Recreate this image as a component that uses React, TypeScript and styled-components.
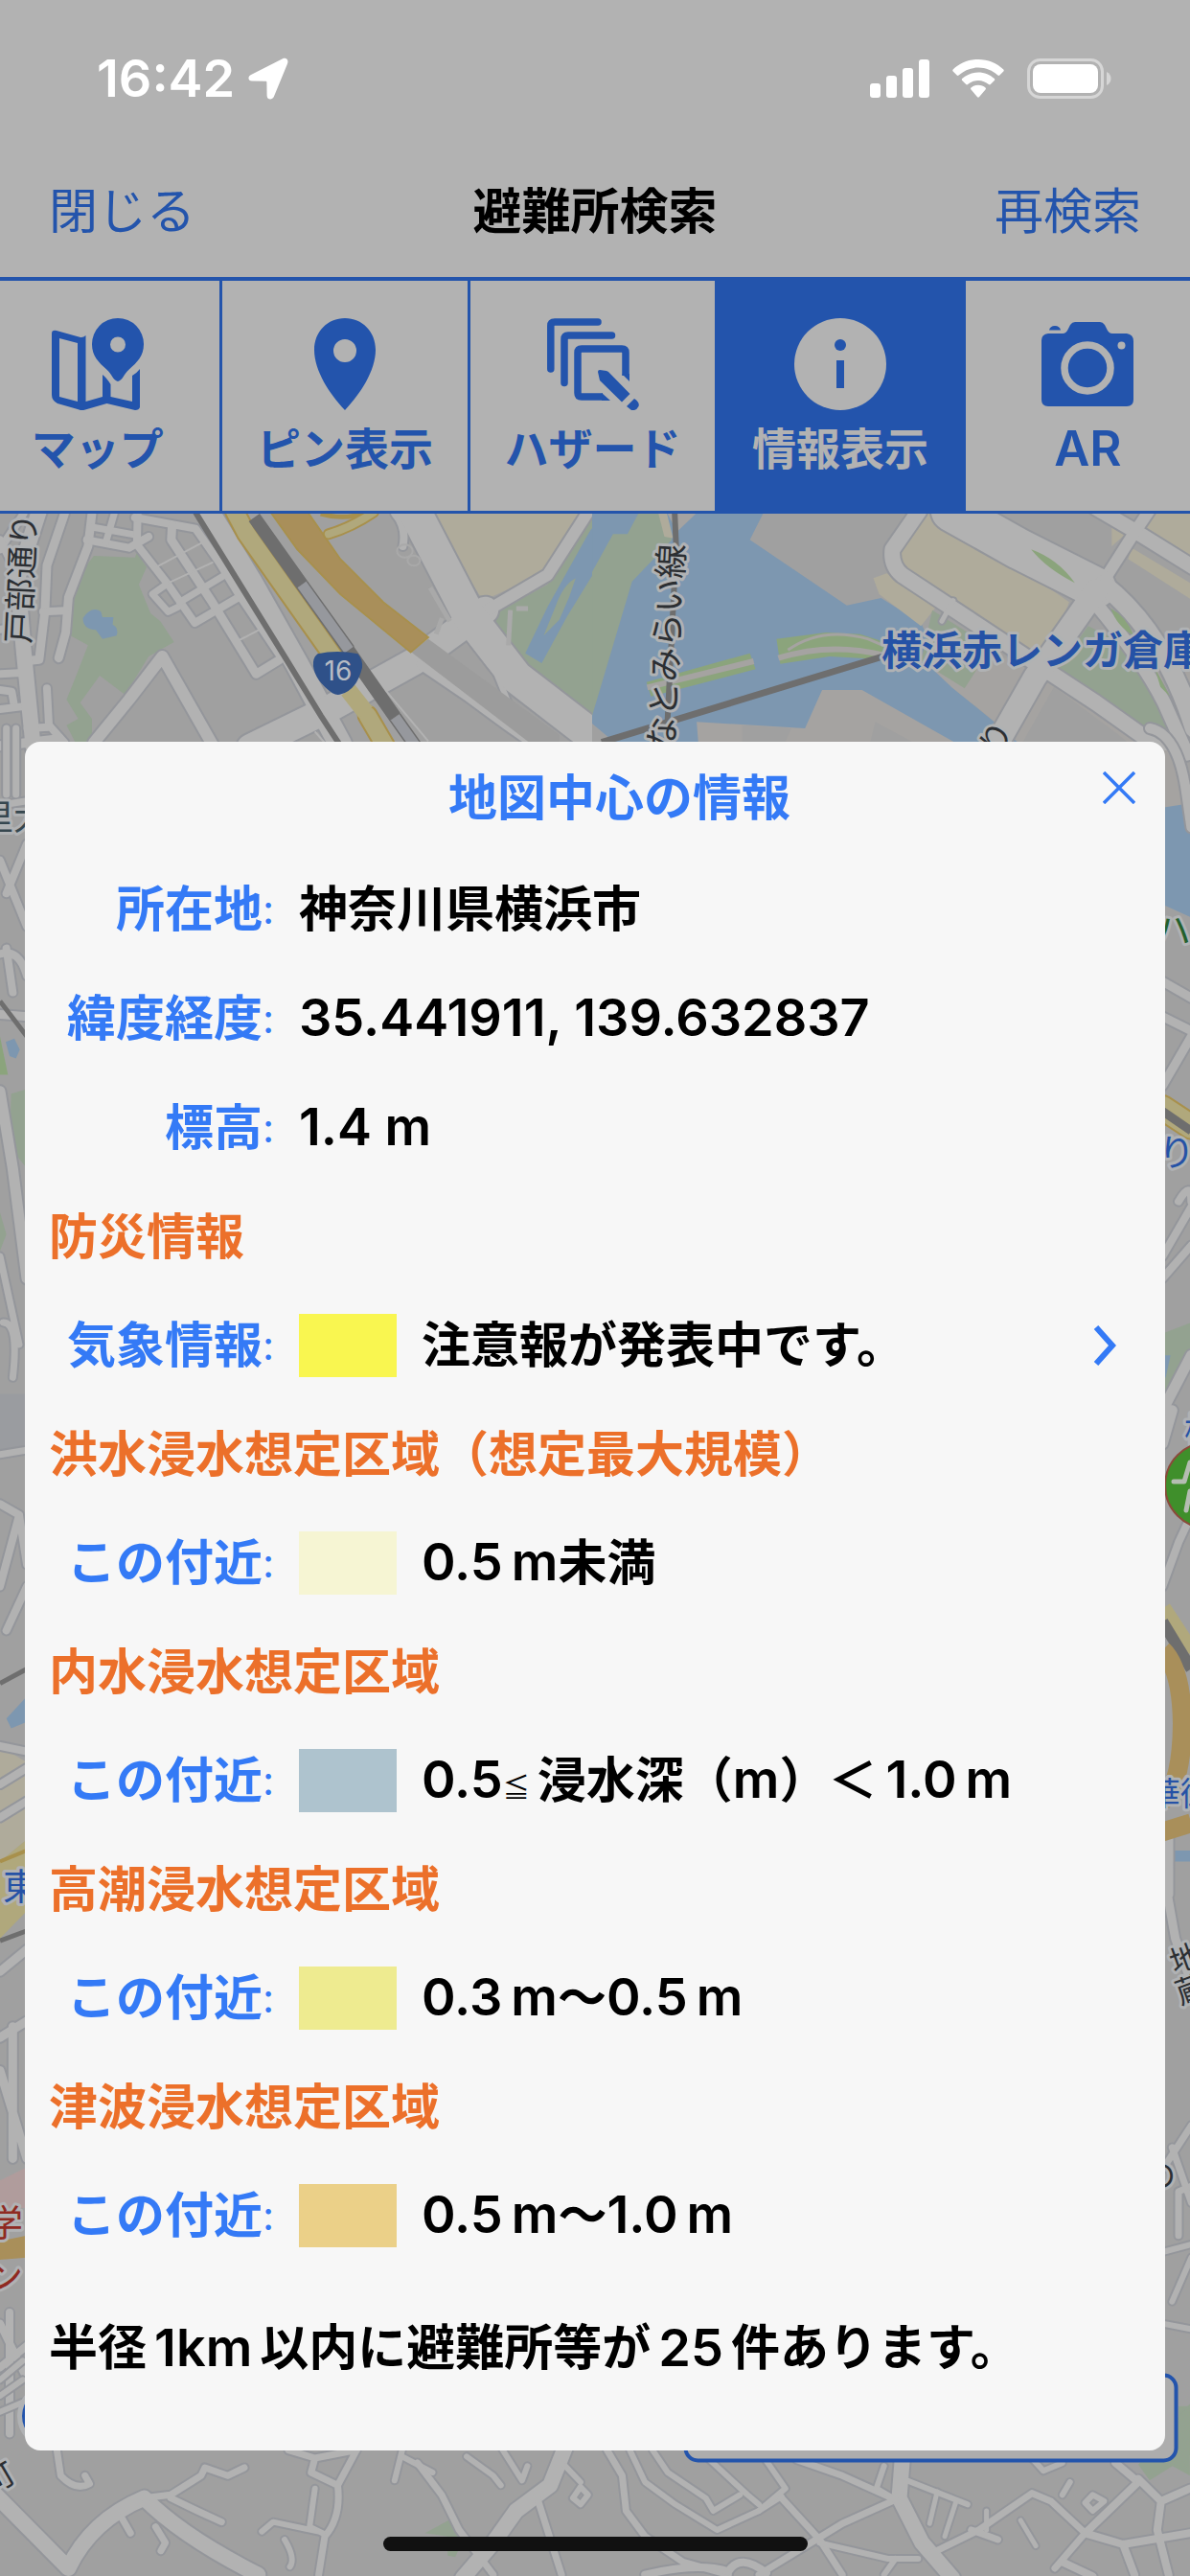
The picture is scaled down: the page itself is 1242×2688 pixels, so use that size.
import React from "react";
import styled, { createGlobalStyle } from "styled-components";

const blueDim = "#2354ac";
const blue = "#347af6";
const orange = "#ec702a";

const GlobalStyle = createGlobalStyle`
  *, *::before, *::after { box-sizing: border-box; }
  body {
    margin: 0;
    background: #b2b2b2;
    color: #000;
    font-family: Inter, "Noto Sans CJK JP", sans-serif;
  }
  button { font: inherit; color: inherit; background: none; border: 0; padding: 0; cursor: pointer; }
  h1, h2, h3, p, dl, dd, dt { margin: 0; font: inherit; }
`;

const Page = styled.div`
  min-height: 100vh;
  display: flex;
  flex-direction: column;
  overflow: hidden;
`;

const StatusBar = styled.header`
  height: 152px;
  padding: 12px 82px 0 101px;
  display: flex;
  align-items: center;
  justify-content: space-between;
  color: #fff;
`;

const StatusGroup = styled.div<{ $gap: number }>`
  display: flex;
  align-items: center;
  gap: ${(p) => p.$gap}px;
`;

const Clock = styled.time`
  font-size: 54px;
  line-height: 64px;
  font-weight: 600;
`;

const NavBar = styled.nav`
  height: 137px;
  padding: 0 51px;
  display: grid;
  grid-template-columns: 1fr auto 1fr;
  align-items: center;
  font-size: 51px;
  line-height: 72px;
`;

const NavButton = styled.button<{ $end?: boolean }>`
  justify-self: ${(p) => (p.$end ? "end" : "start")};
  color: ${blueDim};
  font-weight: 400;
`;

const NavTitle = styled.h1`
  font-weight: 700;
`;

const Tabs = styled.div`
  border-top: 4px solid ${blueDim};
  border-bottom: 3px solid ${blueDim};
`;

const TabStrip = styled.div`
  display: flex;
  margin: 0 -21px 0 -29px;
`;

const Tab = styled.button<{ $active?: boolean }>`
  flex: 1 1 0;
  min-width: 0;
  height: 240px;
  padding-top: 39px;
  display: flex;
  flex-direction: column;
  align-items: center;
  gap: 8px;
  border-left: 3px solid ${blueDim};
  background: ${(p) => (p.$active ? blueDim : "#b2b2b2")};
  color: ${(p) => (p.$active ? "#b2b2b2" : blueDim)};
  white-space: nowrap;
`;

const TabLabel = styled.span<{ $latin?: boolean }>`
  font-size: ${(p) => (p.$latin ? 51 : 46)}px;
  line-height: 64px;
  font-weight: ${(p) => (p.$latin ? 600 : 700)};
`;

const MapArea = styled.main`
  position: relative;
  flex: 1;
  padding: 238px 26px 86px;
  background: #a0a0a0;
`;

const MapCanvas = styled.svg`
  position: absolute;
  inset: 0;
  width: 100%;
  height: 100%;
`;

const Dialog = styled.section`
  position: relative;
  min-height: 1783px;
  padding: 0 25px;
  border-radius: 16px;
  background: #f7f7f7;
  font-size: 51px;
  line-height: 72px;
  font-weight: 700;
`;

const DialogHeader = styled.div`
  display: flex;
  align-items: center;
  height: 118px;
  margin: 0 -25px;
  padding-left: 147px;
  color: ${blue};
`;

const DialogTitle = styled.h2`
  flex: 1;
  text-align: center;
`;

const CloseButton = styled.button`
  width: 96px;
  height: 96px;
  display: grid;
  place-items: center;
  align-self: flex-start;
`;

const Section = styled.h3`
  height: 113px;
  display: flex;
  align-items: center;
  color: ${orange};
`;

const InfoRow = styled.dl`
  height: 114px;
  display: flex;
  align-items: center;
`;

const Label = styled.dt`
  width: 235px;
  flex: none;
  display: flex;
  justify-content: flex-end;
  color: ${blue};
`;

const Colon = styled.span`
  font-size: 42px;
  font-weight: 400;
`;

const Value = styled.dd`
  flex: 1;
  margin-left: 26px;
  display: flex;
  align-items: center;
  gap: 26px;
`;

const Swatch = styled.span<{ $color: string }>`
  width: 102px;
  height: 66px;
  background: ${(p) => p.$color};
`;

const Latin = styled.span`
  font-size: 54px;
  line-height: 1;
  font-weight: 600;
`;

const Small = styled.span`
  font-size: 28px;
  line-height: 1;
  font-weight: 400;
`;

const MoreButton = styled.button`
  width: 96px;
  height: 96px;
  margin-right: -10px;
  display: grid;
  place-items: center;
  color: ${blue};
`;

const Summary = styled.p`
  height: 162px;
  display: flex;
  align-items: center;
  white-space: pre;
`;

const HomeIndicator = styled.div`
  position: absolute;
  left: 50%;
  bottom: 26px;
  width: 443px;
  height: 15px;
  margin-left: -221px;
  border-radius: 8px;
  background: #111;
`;

/* ---------- icons ---------- */

const LocationArrow = () => (
  <svg width="42" height="44" viewBox="0 0 42 44" fill="currentColor">
    <path d="M36 1.200 3 18c-4 2-3 6.500 1 6.600l14.500.2c.6 0 .9.300.9.900l.2 14c.1 4.500 5.400 5.200 7.200 1.400L40.800 7c2-4.500-1-7.500-4.800-5.800z" />
  </svg>
);

const SignalBars = () => (
  <svg width="62" height="40" viewBox="0 0 62 40" fill="currentColor">
    <rect x="0" y="25" width="11" height="15" rx="3" />
    <rect x="17" y="17" width="11" height="23" rx="3" />
    <rect x="34" y="9" width="11" height="31" rx="3" />
    <rect x="51" y="0" width="11" height="40" rx="3" />
  </svg>
);

const Wifi = () => (
  <svg width="54" height="40" viewBox="0 0 54 40" fill="currentColor">
    <path d="M27 0C16.800 0 7.500 4 .7 10.500c-.6.600-.6 1.400 0 2l4 4c.5.500 1.300.500 1.900 0C12 11.500 19 8.500 27 8.500s15 3 20.400 8c.6.500 1.400.500 1.900 0l4-4c.6-.6.600-1.400 0-2C46.500 4 37.200 0 27 0z" />
    <path d="M27 13.500c-6.500 0-12.400 2.500-16.800 6.600-.6.500-.6 1.400 0 2l4 4c.5.500 1.300.500 1.900 0 2.900-2.600 6.700-4.200 10.900-4.200s8 1.600 10.900 4.200c.6.500 1.400.500 1.900 0l4-4c.6-.6.600-1.500 0-2-4.400-4.100-10.300-6.600-16.800-6.600z" />
    <path d="M27 26.700c-2.900 0-5.500 1-7.500 2.800-.6.500-.6 1.400 0 1.900l6.600 7.900c.5.500 1.300.500 1.800 0l6.600-7.900c.6-.5.600-1.400 0-1.900-2-1.800-4.600-2.800-7.500-2.800z" />
  </svg>
);

const Battery = () => (
  <svg width="88" height="42" viewBox="0 0 88 42">
    <rect x="1.500" y="1.500" width="77" height="39" rx="12" fill="none" stroke="#d6d6d6" strokeWidth="3" />
    <rect x="6" y="6" width="68" height="30" rx="8" fill="#fff" />
    <path d="M83 14c3 1.500 4.500 4 4.500 7s-1.500 5.500-4.500 7z" fill="#d6d6d6" />
  </svg>
);

const MapPinIcon = () => (
  <svg width="96" height="96" viewBox="0 0 96 96" fill="currentColor">
    <path
      fillRule="evenodd"
      d="M5 13 30 20Q33 20.500 35.500 18V87L53 82V59Q57 62 61.500 69V82L84 87V60Q89 57 92 53V93Q91 96 87 96L57.500 89 35 95.500Q31 97 27 95L6 89Q0 86 0 80V16Q0 12 5 13ZM8 21V82L27 87V26Z"
    />
    <path
      fillRule="evenodd"
      d="M69 0a27 27 0 0 1 27 27.300c0 12-7 19-15 26-6 5-7 12-12 12.600-5-.6-6-7.600-12-12.600-8-7-15-14-15-26A27 27 0 0 1 69 0zm0 19.500a8 8 0 1 0 0 16 8 8 0 0 0 0-16z"
    />
  </svg>
);

const PinIcon = () => (
  <svg width="96" height="96" viewBox="0 0 96 96" fill="currentColor">
    <path
      fillRule="evenodd"
      d="M48 0C66 0 80 14 80 33c0 22-16 46-32 63C32 79 16 55 16 33 16 14 30 0 48 0zm0 22a12 12 0 1 0 0 24 12 12 0 0 0 0-24z"
    />
  </svg>
);

const HazardIcon = () => (
  <svg width="96" height="96" viewBox="0 0 96 96" fill="none" stroke="currentColor" strokeWidth="7.500">
    <path strokeLinecap="round" d="M3.800 53V8Q3.800 4 8 4H53" />
    <path strokeLinecap="round" d="M18 67.500V22Q18 18 22 18H67.500" />
    <path d="M58 82H36Q32 82 32 78V36Q32 32 36 32H78Q82 32 82 36V60" />
    <path fill="currentColor" stroke="none" d="M57 78 66 86H57ZM78 58 86 66V58Z" />
    <path fill="currentColor" stroke="none" d="M53 56Q53 54 55 54L62 55 64 56 86.500 79 78 87.500 55 65ZM91 84Q97 88 95.500 92 93 97 88 96L83 92Z" />
  </svg>
);

const InfoIcon = () => (
  <svg width="96" height="96" viewBox="0 0 96 96">
    <circle cx="48" cy="48" r="48" fill="currentColor" />
    <circle cx="48" cy="28" r="6" fill={blueDim} />
    <rect x="44" y="44" width="8" height="29" fill={blueDim} />
  </svg>
);

const CameraIcon = () => (
  <svg width="96" height="96" viewBox="0 0 96 96" fill="currentColor">
    <path d="M7 16H22Q26 16 28 11L30 7Q32 4 35 4H61Q64 4 66 7L68 11Q70 16 74 16H89Q96 17 96 24V85Q96 92 89 92H7Q0 92 0 85V23Q0 17 7 16Z" />
    <path d="M8 12.500Q9 8 14 8T20 12.500Z" />
    <circle cx="48" cy="52" r="24" fill="none" stroke="#b2b2b2" strokeWidth="7.500" />
    <circle cx="83.500" cy="28.500" r="4" fill="#b2b2b2" />
  </svg>
);

/* ---------- map drawing ---------- */

const c = {
  road: "#b2b2b2",
  casing: "#94969b",
  green: "#93a290",
  grass: "#8ba47c",
  water: "#7d97b0",
  tan: "#afab9b",
  yellow: "#b0a87c",
  amber: "#a8904c",
  ochre: "#a98f5a",
  rail: "#6e6e6e",
  warm: "#a5a3a1",
};

type RoadSpec = [width: number, d: string];

const Roads = ({ list, fill = c.road, edge = c.casing }: { list: RoadSpec[]; fill?: string; edge?: string }) => (
  <g fill="none" strokeLinejoin="round" strokeLinecap="round">
    {list.map(([w, d], i) => (
      <path key={"e" + i} d={d} stroke={edge} strokeWidth={w + 4} vectorEffect="non-scaling-stroke" />
    ))}
    {list.map(([w, d], i) => (
      <path key={"f" + i} d={d} stroke={fill} strokeWidth={w} vectorEffect="non-scaling-stroke" />
    ))}
  </g>
);

const Line = ({ d, w, color }: { d: string; w: number; color: string }) => (
  <path d={d} fill="none" stroke={color} strokeWidth={w} vectorEffect="non-scaling-stroke" />
);

const NorthWest = () => (
  <g transform="translate(0 -16) scale(.4082 .3333)">
    <path fill={c.green} d="M240 180 345 185 350 170 375 215 355 270 385 360 410 385 445 450 380 495 320 615 255 555 205 640 235 690V770H195L170 710 200 690 170 630 190 570 225 460 180 430 185 330 215 220Z" />
    <path fill={c.water} d="M212 375Q235 335 258 355L262 372H290L288 395Q305 405 298 430L262 440 245 412Q212 410 212 375Z" />
    <path fill={c.green} d="M1490 40H1568V770L1500 700 1370 560 1250 370 1400 270Z" />
    <path fill={c.water} d="M1568 40Q1520 70 1500 120L1400 340 1343 485 1385 516 1450 370 1520 230 1568 110ZM1568 480 1510 700 1568 750Z" />
    <path fill={c.green} d="M1472 250Q1440 270 1420 340L1390 430 1430 380 1455 310Z" />
    <path fill={c.tan} d="M1090 40H1490L1380 240 1235 320Z" />
    <Roads
      list={[
        [8, "M0 160 60 48"],
        [8, "M0 130 50 250"],
        [8, "M0 410 50 405"],
        [8, "M0 600 30 605 35 640"],
        [8, "M0 550 70 545"],
        [8, "M0 660 70 650"],
        [10, "M0 775 140 755"],
        [8, "M120 595 125 710 165 765"],
        [8, "M70 720 125 716"],
        [9, "M165 48 120 210 115 350 100 505 60 510"],
        [9, "M235 48 225 150 175 310 168 420 150 500"],
        [8, "M110 355 165 352"],
        [8, "M222 130 330 155 380 120"],
        [7, "M235 90 350 115"],
        [7, "M292 48 270 140"],
        [8, "M352 48 350 145 430 270 498 390 610 310"],
        [8, "M345 60 500 95 560 200 610 300 720 500"],
        [9, "M440 85 438 130 540 320 655 550 715 505"],
        [7, "M425 270 390 300 430 355 455 340"],
        [7, "M460 325 575 240"],
        [12, "M240 765 330 630 415 495 545 775"],
        [24, "M530 40 640 260 760 520 870 770"],
        [16, "M100 40 45 250 60 470 85 780"],
        [28, "M640 780 840 660 1060 510 1240 350"],
        [12, "M1240 355 1400 240 1505 40"],
        [8, "M1010 48Q1040 90 1030 150"],
        [6, "M1200 440 1270 550 1300 640"],
        [12, "M1080 520 1200 620 1300 710 1370 770"],
        [34, "M1060 40 1200 370 1320 560 1500 730 1568 790"],
      ]}
    />
    <Line d="M400 215 515 140M430 265 545 200M612 444 665 410M985 600 1095 760M805 730 830 765" w={2} color={c.road} />
    <Line d="M1100 280 1150 385M1115 425 1130 375M1305 350 1300 460M1320 345H1350" w={5} color="#a9a9a9" />
    <circle cx="1035" cy="165" r="20" fill="none" stroke="#a9a9a9" strokeWidth="2" vectorEffect="non-scaling-stroke" />
    <circle cx="1058" cy="195" r="16" fill="none" stroke="#a9a9a9" strokeWidth="2" vectorEffect="non-scaling-stroke" />
    <path fill="#9c9c9c" d="M1050 480 1095 440 1430 740V780H1370Z" />
    <Line d="M500 44 730 500 820 680 868 770" w={6} color={c.rail} />
    <path fill={c.ochre} stroke={c.amber} strokeWidth="5" d="M690 40H785L870 190 980 325 1095 435 1050 482 870 300 760 160Z" />
    <Line d="M820 48Q880 70 940 44" w={5} color={c.amber} />
    <Roads list={[[8, "M840 112Q900 90 955 44"]]} fill={c.yellow} edge={c.amber} />
    <Roads list={[[18, "M600 40 630 110 855 500"], [18, "M940 680 985 775"]]} fill={c.yellow} edge={c.amber} />
    <Line d="M890 600 935 670" w={18} color={c.yellow} />
    <Line d="M650 60 772 270M890 475 1010 685" w={14} color={c.rail} />
    <Line d="M772 270 892 475M1010 685 1065 780" w={14} color={c.rail} />
    <Line d="M772 270 892 475M1010 685 1065 780" w={11} color="#96989d" />
    <path fill="#2f5189" d="M812 487Q862 473 915 487 928 505 926 530 912 600 872 613 862 618 850 610 805 570 801 525 799 500 812 487Z" />
  </g>
);

const NorthEast = () => (
  <g transform="translate(620 -16) scale(.3967 .3333)">
    <path fill={c.water} d="M-5 40H448L410 130 665 335 755 312 860 390 940 590 1130 775H-5Z" />
    <path fill={c.warm} d="M860 500 1568 500V780H1130L1040 685 940 590ZM270 700 555 720 600 600H705L965 775H275Z" />
    <path fill="#a0a0a0" d="M-5 705 60 770H-5ZM390 710 520 720 500 770H390ZM740 700 850 770H725ZM1210 590 1380 740 1420 780H1120Z" />
    <path fill={c.green} d="M-5 230 50 112 88 112 120 40H170L205 130 100 260-5 680Z" />
    <path fill={c.tan} d="M168 40H190L208 125 185 120Z" />
    <path fill={c.warm} d="M190 40H275L218 105Z" />
    <path fill={c.grass} d="M138 575 410 485 425 535 150 620ZM480 440 610 420 700 425 765 450V505L620 495 490 518Z" />
    <Line d="M140 592 420 510M485 500Q620 450 760 490" w={6} color={c.warm} />
    <Line d="M510 475Q600 400 720 440L760 460" w={3} color={c.warm} />
    <Line d="M212 40 216 150 190 775" w={6} color={c.rail} />
    <Line d="M20 764 760 495" w={7} color={c.rail} />
    <path fill={c.tan} d="M735 250 770 235 900 340 860 400 750 300ZM870 40 1100 200 1250 325 1200 480H1150L830 240 800 190ZM1440 40H1575V200L1420 80ZM1362 85 1400 110 1362 150ZM1415 155 1575 270V320L1405 190Z" />
    <path fill={c.green} d="M890 350 1010 440V530L975 595 860 510ZM1300 400 1400 460 1480 620 1525 795 1470 770 1215 540Z" />
    <Roads
      list={[
        [16, "M855 40 785 160Q780 210 810 240L1160 515 1320 640 1510 800"],
        [15, "M1320 30 1420 100 1575 215"],
        [12, "M1460 40 1420 110 1340 260"],
        [42, "M940 40 1120 160 1320 280"],
        [20, "M1340 270Q1500 420 1580 720"],
        [14, "M1320 330Q1440 500 1500 640L1560 800"],
        [24, "M1320 290 1160 560 1050 790"],
        [5, "M945 320 915 385"],
      ]}
    />
    <path fill={c.grass} d="M1150 160Q1220 190 1265 265 1190 220 1150 160ZM1360 345Q1400 370 1420 430 1375 400 1360 345ZM1475 530 1515 620 1490 590Z" />
  </g>
);

const WestEdge = () => (
  <g transform="translate(0 224) scale(.3333 1.148)">
    <path fill="#9a9ca0" d="M0 605H84V655H0Z" />
    <path fill={c.grass} d="M0 280 25 315H0Z" />
    <path fill={c.green} d="M35 332 84 328V400L30 380ZM0 440 20 460 0 475Z" />
    <path fill={c.water} d="M18 285 45 282 62 292 50 300 30 298ZM20 900 84 880V903L35 909Z" />
    <path fill={c.tan} d="M0 925 84 940V1010L0 1030Z" />
    <path fill={c.yellow} d="M0 1030 84 1010V1075L0 1100Z" />
    <path fill="#b09c9c" d="M0 1320 84 1308V1345H0Z" />
    <Roads
      list={[
        [7, "M20 0V60M50 0V60M0 70 84 66"],
        [8, "M0 120 84 180M20 150 84 105"],
        [8, "M0 205Q60 200 84 225M20 200 40 240"],
        [9, "M0 260 84 262"],
        [11, "M0 330 40 400 84 500"],
        [7, "M0 480 60 560M10 540Q60 540 40 590"],
        [7, "M0 660 84 656"],
        [8, "M0 705 60 715 84 760M0 780 60 715M20 820 84 780"],
        [8, "M0 925 84 930M0 960 84 945M0 990 84 975"],
        [9, "M0 1130 84 1110M0 1190 84 1175"],
        [9, "M0 1220 84 1300M40 1180V1300"],
        [8, "M0 1450 84 1500M0 1490 84 1470M30 1440V1550"],
      ]}
    />
    <Line d="M0 248 84 280M0 868 84 855M0 1102 84 1093" w={5} color={c.rail} />
    <Line d="M0 1030 84 1020" w={4} color={c.amber} />
    <path fill={c.ochre} d="M0 1375 84 1370V1390L0 1392Z" />
  </g>
);

const EastEdge = () => (
  <g transform="translate(1180 224) scale(.3333 1.148)">
    <path fill={c.warm} d="M100 20H150L190 65V72H100Z" />
    <path fill={c.water} d="M100 72 190 68V172L100 160ZM100 1020H190V1030H100Z" />
    <path fill={c.green} d="M100 550 190 540V580L100 610ZM150 1525H190V1570H150Z" />
    <path fill={c.water} d="M100 570H125L110 590H100Z" />
    <Roads
      list={[
        [10, "M60 0Q150 5 175 60L190 90"],
        [9, "M100 230 190 245M100 262 190 275M100 325 190 280"],
        [8, "M150 430Q190 410 190 430"],
        [8, "M100 480 190 435M100 500 190 470"],
        [11, "M100 620 190 570M100 650 130 620"],
        [8, "M100 780 150 740 190 715"],
        [9, "M100 1035 140 1100 190 1140M120 1000V1060"],
        [7, "M100 1310 190 1270M130 1290 190 1340M150 1370V1330L190 1325"],
        [6, "M100 1385 190 1378M100 1450 190 1455M130 1430 190 1390"],
      ]}
    />
    <Roads list={[[24, "M100 345 190 362"]]} fill={c.yellow} edge={c.amber} />
    <Line d="M100 348 190 366" w={9} color={c.rail} />
    <Line d="M100 800 190 840" w={18} color={c.yellow} />
    <Line d="M100 812 190 855" w={12} color={c.rail} />
    <Line d="M100 838Q160 855 162 905 160 960 100 975M100 1003 190 995" w={20} color={c.ochre} />
  </g>
);

const South = () => (
  <g transform="translate(0 1904) scale(.792 .3333)">
    <path fill={c.green} d="M560 610 595 565 612 620 600 685 590 680V620ZM1500 395 1568 205V430L1545 400 1515 445Z" />
    <Roads
      list={[
        [16, "M-10 480 90 720Q120 570 190 500 240 620 340 740"],
        [7, "M190 500 225 490 265 430 270 405 300 430 322 405"],
        [7, "M225 500 260 540 292 575M160 560 172 610M205 590 218 640 212 665"],
        [7, "M75 350 80 430Q100 480 118 455L112 430"],
        [7, "M380 350 415 375 470 350M415 375 410 420 445 460 470 350M445 460Q450 560 428 620L420 740"],
        [6, "M415 470 408 590 425 610M345 605 360 575 420 605M375 630Q390 690 382 715"],
        [6, "M530 350 520 445M530 370 570 420M615 370 650 430 660 460"],
        [7, "M550 390 582 490 605 600 650 740"],
        [16, "M745 340 725 460 680 540 650 640 610 750"],
        [6, "M660 340 688 445 695 400M745 400 765 450M765 465 755 500 765 520 775 490Z"],
        [7, "M708 500 740 740M800 350 820 430 825 540 850 620 900 700 960 740"],
        [6, "M830 350 850 450 890 520 945 600 1000 540 1030 495"],
        [6, "M860 350 880 420 930 500 940 540 975 490M935 380 985 490 1000 520M1000 350 1035 470 1000 540"],
        [7, "M1030 500 1080 630 1110 740M1000 740 1110 580 1180 505M1050 380 1110 430 1180 505"],
        [16, "M1190 350 1185 500 1215 640 1255 750"],
        [6, "M1165 400 1155 470 1180 505M1195 445 1275 520M1080 640 1170 690H1210M1180 690 1165 740"],
        [5, "M1235 480 1225 580M1260 510 1245 620M1300 540V600M1345 570 1365 650"],
        [7, "M1230 670 1290 600 1360 485 1385 510 1430 610 1390 720M1280 600 1315 630"],
        [8, "M1430 610 1500 450 1470 390M1430 610 1480 645 1568 610M1480 645 1495 740"],
        [8, "M1500 440 1530 510 1525 600 1540 740M1530 510 1568 470M1400 700 1440 745"],
        [6, "M1440 490 1455 510 1440 540 1430 515ZM1350 350 1375 415 1400 390M1410 450 1400 490"],
        [8, "M850 740Q920 700 960 730 975 670 1010 735"],
        [6, "M0 130 30 70M0 180 30 130M0 230 30 200"],
      ]}
    />
  </g>
);

const MapText = styled.text<{ $color: string; $size: number; $bold?: boolean }>`
  fill: ${(p) => p.$color};
  font-size: ${(p) => p.$size}px;
  font-weight: ${(p) => (p.$bold ? 700 : 400)};
  stroke: #b0b2b4;
  stroke-width: 6px;
  stroke-linejoin: round;
  paint-order: stroke;
`;

const ShieldText = styled.text`
  fill: #b8bcc4;
  font-size: 28px;
  text-anchor: middle;
`;

const HazardMap = () => (
  <MapCanvas viewBox="0 0 1242 2152" preserveAspectRatio="xMidYMin slice" aria-hidden="true">
    <NorthWest />
    <NorthEast />
    <WestEdge />
    <EastEdge />
    <South />
    <ShieldText x="353" y="174">16</ShieldText>
    <MapText $color="#2c2f33" $size={34} transform="translate(31 136) rotate(-87)">戸部通り</MapText>
    <MapText $color="#2c2f33" $size={36} transform="translate(703 248) rotate(-87)">なとみらい線</MapText>
    <MapText $color="#2552a6" $size={42} $bold x="920" y="158">横浜赤レンガ倉庫</MapText>
    <MapText $color="#2c2f33" $size={35} transform="translate(1042 256) rotate(-60)">り</MapText>
    <MapText $color="#36474f" $size={36} x="-22" y="330">里大</MapText>
    <MapText $color="#2552a6" $size={38} x="3" y="1446">東</MapText>
    <MapText $color="#8f2a22" $size={38} x="-14" y="1797">学</MapText>
    <MapText $color="#8f2a22" $size={38} x="-14" y="1853">ン</MapText>
    <MapText $color="#23602c" $size={38} x="1205" y="448">ハ</MapText>
    <MapText $color="#2552a6" $size={38} x="1209" y="680">り</MapText>
    <MapText $color="#2552a6" $size={34} x="1236" y="968">桜</MapText>
    <circle cx="1261" cy="1014" r="45" fill="#3f8f2b" stroke="#8a4a3a" strokeWidth="2" />
    <path
      d="M1225 1010H1236L1242 990M1242 1020 1238 1040"
      stroke="#b5bdb2"
      strokeWidth="5"
      strokeLinecap="round"
      strokeLinejoin="round"
      fill="none"
    />
    <MapText $color="#2552a6" $size={34} x="1198" y="1348">華街</MapText>
    <MapText $color="#2c2f33" $size={32} transform="translate(1226 1524) rotate(-20)">地</MapText>
    <MapText $color="#2c2f33" $size={32} transform="translate(1232 1556) rotate(-20)">蔵</MapText>
    <MapText $color="#2c2f33" $size={33} x="1194" y="1746">の</MapText>
    <MapText $color="#2c2f33" $size={33} transform="translate(-10 2068) rotate(-30)">町</MapText>
    <circle cx="52" cy="1985" r="34" fill="#b0b2b4" />
    <circle cx="52" cy="1985" r="29" fill={blueDim} />
    <rect x="715.500" y="1942.500" width="512" height="89" rx="13" fill="#adadad" stroke={blueDim} strokeWidth="4" />
  </MapCanvas>
);

/* ---------- content ---------- */

const thin = "\u2009";

const tabs: { label: string; icon: React.ReactNode; active?: boolean; latin?: boolean }[] = [
  { label: "マップ", icon: <MapPinIcon /> },
  { label: "ピン表示", icon: <PinIcon /> },
  { label: "ハザード", icon: <HazardIcon /> },
  { label: "情報表示", icon: <InfoIcon />, active: true },
  { label: "AR", icon: <CameraIcon />, latin: true },
];

const Field = ({
  label,
  swatch,
  action,
  children,
}: {
  label: string;
  swatch?: string;
  action?: React.ReactNode;
  children: React.ReactNode;
}) => (
  <InfoRow>
    <Label>
      {label}
      <Colon>:</Colon>
    </Label>
    <Value>
      {swatch && <Swatch $color={swatch} />}
      <span>{children}</span>
    </Value>
    {action}
  </InfoRow>
);

export default function App() {
  return (
    <Page>
      <GlobalStyle />
      <StatusBar>
        <StatusGroup $gap={14}>
          <Clock>16:42</Clock>
          <LocationArrow />
        </StatusGroup>
        <StatusGroup $gap={24}>
          <SignalBars />
          <Wifi />
          <Battery />
        </StatusGroup>
      </StatusBar>
      <NavBar>
        <NavButton>閉じる</NavButton>
        <NavTitle>避難所検索</NavTitle>
        <NavButton $end>再検索</NavButton>
      </NavBar>
      <Tabs>
        <TabStrip>
          {tabs.map((t) => (
            <Tab key={t.label} $active={t.active}>
              {t.icon}
              <TabLabel $latin={t.latin}>{t.label}</TabLabel>
            </Tab>
          ))}
        </TabStrip>
      </Tabs>
      <MapArea>
        <HazardMap />
        <Dialog role="dialog" aria-labelledby="dialog-title">
          <DialogHeader>
            <DialogTitle id="dialog-title">地図中心の情報</DialogTitle>
            <CloseButton aria-label="閉じる">
              <svg width="34" height="34" viewBox="0 0 34 34" fill="none" stroke="currentColor" strokeWidth="3.500">
                <path d="M1 1 33 33M33 1 1 33" />
              </svg>
            </CloseButton>
          </DialogHeader>
          <Field label="所在地">神奈川県横浜市</Field>
          <Field label="緯度経度">
            <Latin>35.441911, 139.632837</Latin>
          </Field>
          <Field label="標高">
            <Latin>1.4 m</Latin>
          </Field>
          <Section>防災情報</Section>
          <Field
            label="気象情報"
            swatch="#f9f650"
            action={
              <MoreButton aria-label="詳細">
                <svg width="24" height="42" viewBox="0 0 24 42" fill="none" stroke="currentColor" strokeWidth="6">
                  <path d="M3 2 20 21 3 40" />
                </svg>
              </MoreButton>
            }
          >
            注意報が発表中です。
          </Field>
          <Section>洪水浸水想定区域（想定最大規模）</Section>
          <Field label="この付近" swatch="#f6f5d3">
            <Latin>0.5{thin}m</Latin>未満
          </Field>
          <Section>内水浸水想定区域</Section>
          <Field label="この付近" swatch="#aec3ce">
            <Latin>0.5</Latin>
            <Small>≦</Small>
            {thin}浸水深（<Latin>m</Latin>）＜<Latin>{thin}1.0{thin}m</Latin>
          </Field>
          <Section>高潮浸水想定区域</Section>
          <Field label="この付近" swatch="#eeeb90">
            <Latin>0.3{thin}m</Latin>〜<Latin>0.5{thin}m</Latin>
          </Field>
          <Section>津波浸水想定区域</Section>
          <Field label="この付近" swatch="#ebd088">
            <Latin>0.5{thin}m</Latin>〜<Latin>1.0{thin}m</Latin>
          </Field>
          <Summary>
            半径{thin}
            <Latin>1km</Latin>
            {thin}以内に避難所等が{thin}
            <Latin>25</Latin>
            {thin}件あります。
          </Summary>
        </Dialog>
        <HomeIndicator />
      </MapArea>
    </Page>
  );
}
